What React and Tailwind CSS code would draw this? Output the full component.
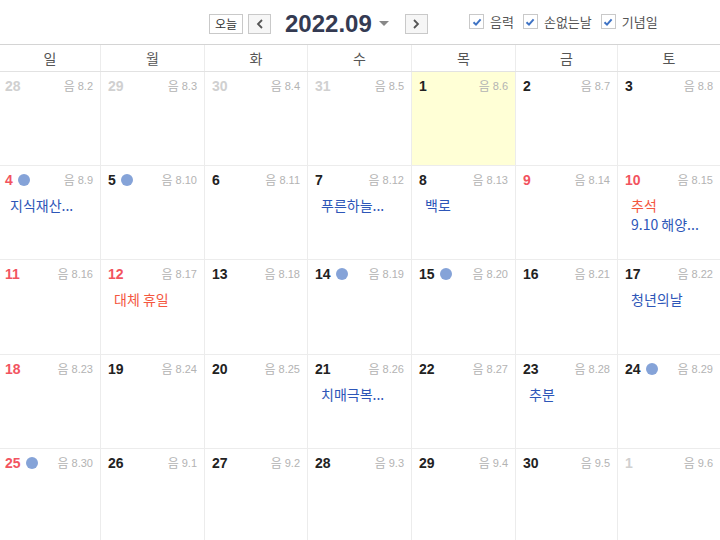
import React from "react";

const FONT = { fontFamily: '"Liberation Sans", "Noto Sans CJK KR", sans-serif' };
const KR = { fontFamily: '"Noto Sans CJK KR", "Liberation Sans", sans-serif' };

const weeks = [
  [
    { d: 28, l: "8.2", o: true },
    { d: 29, l: "8.3", o: true },
    { d: 30, l: "8.4", o: true },
    { d: 31, l: "8.5", o: true },
    { d: 1, l: "8.6", today: true },
    { d: 2, l: "8.7" },
    { d: 3, l: "8.8" },
  ],
  [
    { d: 4, l: "8.9", red: true, dot: true, ev: [["지식재산...", "b"]] },
    { d: 5, l: "8.10", dot: true },
    { d: 6, l: "8.11" },
    { d: 7, l: "8.12", ev: [["푸른하늘...", "b"]] },
    { d: 8, l: "8.13", ev: [["백로", "b"]] },
    { d: 9, l: "8.14", red: true },
    { d: 10, l: "8.15", red: true, ev: [["추석", "r"], ["9.10 해양...", "b"]] },
  ],
  [
    { d: 11, l: "8.16", red: true },
    { d: 12, l: "8.17", red: true, ev: [["대체 휴일", "r"]] },
    { d: 13, l: "8.18" },
    { d: 14, l: "8.19", dot: true },
    { d: 15, l: "8.20", dot: true },
    { d: 16, l: "8.21" },
    { d: 17, l: "8.22", ev: [["청년의날", "b"]] },
  ],
  [
    { d: 18, l: "8.23", red: true },
    { d: 19, l: "8.24" },
    { d: 20, l: "8.25" },
    { d: 21, l: "8.26", ev: [["치매극복...", "b"]] },
    { d: 22, l: "8.27" },
    { d: 23, l: "8.28", ev: [["추분", "b"]] },
    { d: 24, l: "8.29", dot: true },
  ],
  [
    { d: 25, l: "8.30", red: true, dot: true },
    { d: 26, l: "9.1" },
    { d: 27, l: "9.2" },
    { d: 28, l: "9.3" },
    { d: 29, l: "9.4" },
    { d: 30, l: "9.5" },
    { d: 1, l: "9.6", o: true },
  ],
];

const rowH = ["h-[94px]", "h-[94px]", "h-[95px]", "h-[94px]", "h-[95px]"];

const days = ["일", "월", "화", "수", "목", "금", "토"];
const COLS = "grid grid-cols-[101px_104px_103px_104px_104px_102px_102px]";

function Check({ label }) {
  return (
    <label className="flex items-center gap-[6px] text-[13px] text-[#555]" style={KR}>
      <span className="w-[15px] h-[15px] border border-[#c9c9c9] bg-white flex items-center justify-center">
        <svg width="10" height="10" viewBox="0 0 10 10">
          <path d="M1.5 5.2 L4 7.6 L8.6 2.4" fill="none" stroke="#3f73c4" strokeWidth="2" />
        </svg>
      </span>
      {label}
    </label>
  );
}

function Cell({ c, col, h }) {
  const numColor = c.o ? "text-[#d0d0d0]" : c.red ? "text-[#f2545f]" : "text-[#222]";
  return (
    <div
      className={`${h} border-r border-b border-[#ececec] last:border-r-0 ${
        c.today ? "bg-[#ffffd6] border-[#e7e6c3]" : "bg-white"
      } ${col === 0 ? "pl-[5px]" : "pl-[7px]"} pr-[7px] pt-[6px]`}
    >
      <div className="flex items-center h-[16px]">
        <span className={`text-[14px] font-bold leading-none ${numColor}`} style={FONT}>
          {c.d}
        </span>
        {c.dot && <span className="ml-[5px] w-[12px] h-[12px] rounded-full bg-[#85a3d8]" />}
        <span className="ml-auto flex items-center gap-[3px] text-[#b3b3b3]">
          <span className="text-[12px] leading-none" style={KR}>음</span>
          <span className="text-[11px] leading-none" style={FONT}>{c.l}</span>
        </span>
      </div>
      {c.ev && (
        <div className={`mt-[8px] ${col === 0 ? "pl-[5px]" : "pl-[6px]"} flex flex-col`}>
          {c.ev.map(([t, k], i) => (
            <span
              key={i}
              className={`text-[14px] leading-[19px] whitespace-nowrap ${
                k === "r" ? "text-[#f4573f]" : "text-[#2d56b8]"
              }`}
              style={KR}
            >
              {t}
            </span>
          ))}
        </div>
      )}
    </div>
  );
}

export default function App() {
  return (
    <div className="w-[720px] h-[540px] overflow-hidden bg-white" style={FONT}>
      <div className="h-[44px] flex items-center relative">
        <div className="absolute left-[209px] top-[12px] flex items-center">
          <button className="h-[20px] w-[34px] border border-[#c9c9c9] bg-white text-[12px] text-[#333] flex items-center justify-center" style={KR}>
            오늘
          </button>
          <button className="ml-[5px] h-[20px] w-[23px] border border-[#c9c9c9] bg-[#f6f6f6] flex items-center justify-center">
            <svg width="8" height="10" viewBox="0 0 8 10">
              <path d="M6 1 L2 5 L6 9" fill="none" stroke="#555" strokeWidth="1.8" />
            </svg>
          </button>
          <span className="ml-[14px] text-[24px] font-bold text-[#343a52] leading-none" style={FONT}>
            2022.09
          </span>
          <svg className="ml-[7px]" width="10" height="6" viewBox="0 0 10 6">
            <path d="M0 0 L10 0 L5 5 Z" fill="#888" />
          </svg>
          <button className="ml-[16px] h-[20px] w-[23px] border border-[#c9c9c9] bg-[#f6f6f6] flex items-center justify-center">
            <svg width="8" height="10" viewBox="0 0 8 10">
              <path d="M2 1 L6 5 L2 9" fill="none" stroke="#555" strokeWidth="1.8" />
            </svg>
          </button>
        </div>
        <div className="absolute left-[469px] top-[12px] flex items-center gap-[9px]">
          <Check label="음력" />
          <Check label="손없는날" />
          <Check label="기념일" />
        </div>
      </div>
      <div className={`${COLS} border-t border-[#d4d4d4] border-b border-b-[#e2e2e2] h-[28px]`}>
        {days.map((d) => (
          <div
            key={d}
            className="border-r border-[#ececec] last:border-r-0 flex items-center justify-center text-[14px] text-[#555]"
            style={KR}
          >
            {d}
          </div>
        ))}
      </div>
      {weeks.map((w, i) => (
        <div key={i} className={COLS}>
          {w.map((c, j) => (
            <Cell key={j} c={c} col={j} h={rowH[i]} />
          ))}
        </div>
      ))}
    </div>
  );
}
